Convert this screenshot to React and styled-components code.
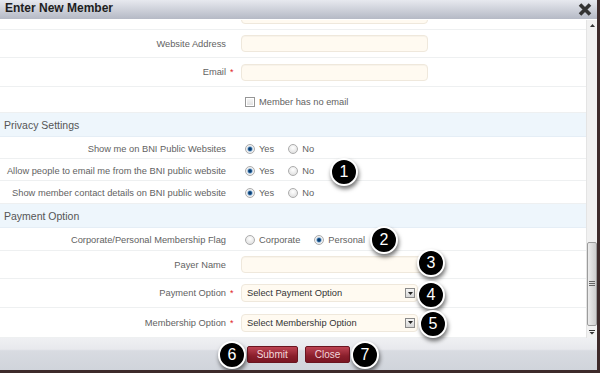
import React from 'react';
import styled, { createGlobalStyle } from 'styled-components';

const GlobalStyle = createGlobalStyle`
  html, body {
    margin: 0;
    padding: 0;
  }
  body {
    background: #3d2a2a;
    width: 600px;
    height: 373px;
    overflow: hidden;
  }
`;

const Dialog = styled.div`
  position: relative;
  width: 597px;
  height: 370px;
  display: flex;
  flex-direction: column;
  background: #fff;
  overflow: hidden;
  font-family: "Liberation Sans", Arial, sans-serif;
`;

const TitleBar = styled.div`
  flex: none;
  height: 19px;
  display: flex;
  align-items: center;
  justify-content: space-between;
  padding: 0 5px;
  background: linear-gradient(#e7e9ef, #b5b9c5);
  border-bottom: 1px solid #fff;
`;

const Title = styled.div`
  font-size: 12px;
  font-weight: bold;
  color: #1e1e1e;
  line-height: 16px;
  margin-top: -3px;
`;

const Body = styled.div`
  flex: 1;
  display: flex;
  min-height: 0;
`;

const FormArea = styled.div`
  flex: 1;
  display: flex;
  flex-direction: column;
  overflow: hidden;
`;

const Row = styled.div`
  flex: none;
  height: ${p => p.$h}px;
  box-sizing: border-box;
  display: flex;
  align-items: ${p => (p.$clip ? 'flex-end' : 'center')};
  padding-top: ${p => p.$pt || 0}px;
  padding-bottom: ${p => (p.$clip ? 5 : 0)}px;
  overflow: hidden;
  border-bottom: 1px solid #eef0f1;
`;

const Label = styled.div`
  width: 226px;
  flex: none;
  text-align: right;
  font-size: 9.3px;
  color: #626262;
`;

const Star = styled.div`
  width: 15px;
  flex: none;
  box-sizing: border-box;
  padding-left: 4px;
  font-size: 9px;
  color: #e01b1b;
`;

const TextInput = styled.div`
  width: ${p => p.$w || 187}px;
  height: 17px;
  flex: none;
  box-sizing: border-box;
  background: #fffaf1;
  border: 1px solid #efe8dc;
  border-radius: 4px;
  box-shadow: inset 0 1px 1px rgba(0, 0, 0, 0.03);
`;

const Select = styled.div`
  width: 177px;
  height: 18px;
  box-sizing: border-box;
  display: flex;
  align-items: center;
  justify-content: space-between;
  padding: 0 2px 0 5px;
  background: #fffaf1;
  border: 1px solid #efe8dc;
  border-radius: 4px;
  font-size: 9.3px;
  color: #333;
`;

const SelectArrow = styled.span`
  width: 10px;
  height: 10px;
  box-sizing: border-box;
  display: flex;
  align-items: center;
  justify-content: center;
  border: 1px solid #8a8a8a;
  background: linear-gradient(#f6f6f6, #d6d6d6);
`;

const SectionHead = styled.div`
  flex: none;
  height: 24px;
  box-sizing: border-box;
  display: flex;
  align-items: center;
  padding-left: 4px;
  background: #eef6fc;
  border-bottom: 1px solid #e5eef6;
  font-size: 10.5px;
  color: #555;
`;

const Options = styled.div`
  display: flex;
  align-items: center;
  padding-left: 4px;
`;

const Option = styled.label`
  display: flex;
  align-items: center;
  gap: 4px;
  margin-right: 14px;
  font-size: 9.3px;
  color: #626262;
`;

const Radio = styled.span`
  width: 10px;
  height: 10px;
  flex: none;
  box-sizing: border-box;
  border-radius: 50%;
  border: 1px solid #acacac;
  background: ${p =>
    p.$checked
      ? 'radial-gradient(circle, #0d3e70 0 1.3px, #3f7cb5 1.9px, #b9cde0 2.6px, #f4f4f4 3.2px, #e2e2e2 100%)'
      : 'radial-gradient(circle at 50% 35%, #ffffff, #d9d9d9)'};
`;

const Checkbox = styled.span`
  width: 10px;
  height: 10px;
  flex: none;
  box-sizing: border-box;
  border: 1px solid #969696;
  background: linear-gradient(#f8f8f8, #dedede);
  box-shadow: inset 0 0 0 1px #fff;
`;

const ScrollBar = styled.div`
  width: 10px;
  flex: none;
  display: flex;
  flex-direction: column;
  background: #f1f1f1;
  border-left: 1px solid #e4e4e4;
`;

const ScrollArrow = styled.div`
  height: 11px;
  flex: none;
  display: flex;
  align-items: center;
  justify-content: center;
`;

const ScrollTrack = styled.div`
  flex: 1;
  display: flex;
  flex-direction: column;
  justify-content: flex-end;
  padding-bottom: 1px;
`;

const ScrollThumb = styled.div`
  height: 84px;
  box-sizing: border-box;
  display: flex;
  align-items: center;
  justify-content: center;
  border: 1px solid #9c9c9c;
  border-radius: 2px;
  background: linear-gradient(90deg, #ececec, #cdcdcd);
`;

const Footer = styled.div`
  flex: none;
  height: 32px;
  box-sizing: border-box;
  display: flex;
  justify-content: center;
  align-items: flex-start;
  gap: 7px;
  padding-top: 8px;
  background: linear-gradient(#eff0f3 0, #e8e9ed 35%, #d8dbe1 40%, #d0d4db 100%);
`;

const Button = styled.button`
  height: 17px;
  padding: 0 9px;
  border: 1px solid #6a1520;
  border-radius: 2px;
  background: linear-gradient(#bd4352, #8a1f2c 60%, #7a1622);
  color: #f3d6da;
  font-family: "Liberation Sans", Arial, sans-serif;
  font-size: 10px;
  line-height: 15px;
`;

const Marker = styled.div`
  position: absolute;
  left: ${p => p.$x - 14}px;
  top: ${p => p.$y - 14}px;
  width: 28px;
  height: 28px;
  box-sizing: border-box;
  border-radius: 50%;
  border: 2px solid #fff;
  background: #000;
  box-shadow: 1px 3px 4px rgba(0, 0, 0, 0.55);
  display: flex;
  align-items: center;
  justify-content: center;
  color: #fff;
  font-family: "Liberation Sans", Arial, sans-serif;
  font-size: 16px;
`;

const privacy = [
  'Show me on BNI Public Websites',
  'Allow people to email me from the BNI public website',
  'Show member contact details on BNI public website',
];

const markers = [
  [1, 344, 172],
  [2, 384, 240],
  [3, 431, 263],
  [4, 431, 295],
  [5, 433, 324],
  [6, 232, 355],
  [7, 365, 355],
];

function DownTriangle() {
  return (
    <svg width="5" height="3" viewBox="0 0 5 3">
      <path d="M0 0 L5 0 L2.5 3 Z" fill="#222" />
    </svg>
  );
}

export default function App() {
  return (
    <>
      <GlobalStyle />
      <Dialog>
        <TitleBar>
          <Title>Enter New Member</Title>
          <svg width="14" height="13" viewBox="0 0 14 13">
            <path d="M2 1.5 L12 11.5 M12 1.5 L2 11.5" stroke="#333" strokeWidth="3.6" />
          </svg>
        </TitleBar>

        <Body>
          <FormArea>
            <Row $h={10} $clip>
              <Label />
              <Star />
              <TextInput />
            </Row>
            <Row $h={28}>
              <Label>Website Address</Label>
              <Star />
              <TextInput />
            </Row>
            <Row $h={29}>
              <Label>Email</Label>
              <Star>*</Star>
              <TextInput />
            </Row>
            <Row $h={26} $pt={5}>
              <Label />
              <Star />
              <Options>
                <Option>
                  <Checkbox />
                  Member has no email
                </Option>
              </Options>
            </Row>

            <SectionHead>Privacy Settings</SectionHead>
            {privacy.map((text, i) => (
              <Row key={text} $h={i === 2 ? 23 : 22} $pt={2}>
                <Label>{text}</Label>
                <Star />
                <Options>
                  <Option>
                    <Radio $checked />
                    Yes
                  </Option>
                  <Option>
                    <Radio />
                    No
                  </Option>
                </Options>
              </Row>
            ))}

            <SectionHead>Payment Option</SectionHead>
            <Row $h={23} $pt={1}>
              <Label>Corporate/Personal Membership Flag</Label>
              <Star />
              <Options>
                <Option>
                  <Radio />
                  Corporate
                </Option>
                <Option>
                  <Radio $checked />
                  Personal
                </Option>
              </Options>
            </Row>
            <Row $h={28}>
              <Label>Payer Name</Label>
              <Star />
              <TextInput />
            </Row>
            <Row $h={29}>
              <Label>Payment Option</Label>
              <Star>*</Star>
              <Select>
                Select Payment Option
                <SelectArrow>
                  <DownTriangle />
                </SelectArrow>
              </Select>
            </Row>
            <Row $h={30}>
              <Label>Membership Option</Label>
              <Star>*</Star>
              <Select>
                Select Membership Option
                <SelectArrow>
                  <DownTriangle />
                </SelectArrow>
              </Select>
            </Row>
          </FormArea>

          <ScrollBar>
            <ScrollArrow>
              <svg width="5" height="3" viewBox="0 0 5 3">
                <path d="M0 3 L5 3 L2.5 0 Z" fill="#333" />
              </svg>
            </ScrollArrow>
            <ScrollTrack>
              <ScrollThumb>
                <svg width="6" height="6" viewBox="0 0 6 6">
                  <path d="M0 0.5 H6 M0 2.5 H6 M0 4.5 H6" stroke="#666" strokeWidth="1" />
                </svg>
              </ScrollThumb>
            </ScrollTrack>
            <ScrollArrow>
              <svg width="6" height="5" viewBox="0 0 6 5">
                <path d="M0 0.5 H6" stroke="#333" strokeWidth="1" />
                <path d="M0.5 2 L5.5 2 L3 4.5 Z" fill="#333" />
              </svg>
            </ScrollArrow>
          </ScrollBar>
        </Body>

        <Footer>
          <Button>Submit</Button>
          <Button>Close</Button>
        </Footer>

        {markers.map(([n, x, y]) => (
          <Marker key={n} $x={x} $y={y}>
            {n}
          </Marker>
        ))}
      </Dialog>
    </>
  );
}
